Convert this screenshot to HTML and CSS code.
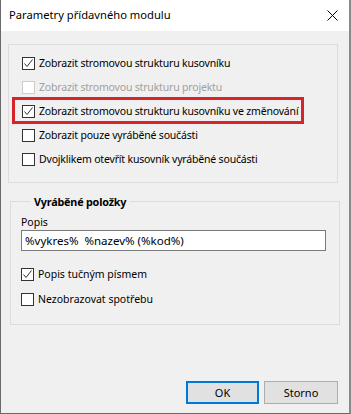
FILE: index.html
```html
<!DOCTYPE html>
<html lang="cs">
<head>
    <meta charset="UTF-8">
    <meta name="viewport" content="width=device-width, initial-scale=1.0">
    <title>Parametry přídavného modulu</title>
    <link rel="stylesheet" href="styles.css">
</head>
<body>
    <div class="window">
        <div class="titlebar">
            <span class="title">Parametry přídavného modulu</span>
            <svg class="close" width="11" height="11" viewBox="0 0 11 11">
                <path d="M0.5 0.5 L10.5 10.5 M10.5 0.5 L0.5 10.5" stroke="#000" stroke-width="1" fill="none"/>
            </svg>
        </div>
        <div class="content">
            <div class="group first">
                <label class="row">
                    <span class="box"><svg width="11" height="11" viewBox="0 0 11 11"><path d="M1.5 5.5 L4 8.5 L9.5 1.5" stroke="#333" stroke-width="1" fill="none"/></svg></span>
                    Zobrazit stromovou strukturu kusovníku
                </label>
                <label class="row disabled">
                    <span class="box"></span>
                    Zobrazit stromovou strukturu projektu
                </label>
                <label class="row marked">
                    <span class="box"><svg width="11" height="11" viewBox="0 0 11 11"><path d="M1.5 5.5 L4 8.5 L9.5 1.5" stroke="#333" stroke-width="1" fill="none"/></svg></span>
                    Zobrazit stromovou strukturu kusovníku ve změnování
                    <span class="highlight"></span>
                </label>
                <label class="row">
                    <span class="box"></span>
                    Zobrazit pouze vyráběné součásti
                </label>
                <label class="row">
                    <span class="box"></span>
                    Dvojklikem otevřít kusovník vyráběné součásti
                </label>
            </div>

            <fieldset class="group second">
                <legend>Vyráběné položky</legend>
                <div class="field-label">Popis</div>
                <div class="textbox">%vykres%&nbsp; %nazev% (%kod%)</div>
                <label class="row">
                    <span class="box"><svg width="11" height="11" viewBox="0 0 11 11"><path d="M1.5 5.5 L4 8.5 L9.5 1.5" stroke="#333" stroke-width="1" fill="none"/></svg></span>
                    Popis tučným písmem
                </label>
                <label class="row">
                    <span class="box"></span>
                    Nezobrazovat spotřebu
                </label>
            </fieldset>
        </div>
        <div class="buttons">
            <button class="default">OK</button>
            <button class="cancel">Storno</button>
        </div>
    </div>
</body>
</html>
```

FILE: styles.css
```css
body {
    margin: 0;
    font-family: "Noto Sans", sans-serif;
    font-size: 10.5px;
    color: #000;
    background-color: #f0f0f0;
}

.window {
    box-sizing: border-box;
    width: 351px;
    height: 414px;
    display: flex;
    flex-direction: column;
    background-color: #f0f0f0;
    border: 1px solid #6a6a6a;
    border-top: none;
    border-right: 2px solid #8a8a8a;
}

.titlebar {
    height: 31px;
    flex-shrink: 0;
    display: flex;
    align-items: center;
    justify-content: space-between;
    background-color: #fff;
    padding: 0 11px 0 8px;
}

.title {
    font-size: 11.2px;
    margin-top: -2px;
}

.close {
    margin-top: -1px;
}

.content {
    flex: 1;
    padding: 13px 11px 0 7px;
}

.group {
    border: 1px solid #dcdcdc;
}

.first {
    height: 139px;
    box-sizing: border-box;
    padding: 10px 12px 0 13px;
    display: flex;
    flex-direction: column;
    gap: 8px;
}

.row {
    position: relative;
    display: flex;
    align-items: center;
    gap: 4px;
    height: 16px;
    white-space: nowrap;
    letter-spacing: -0.18px;
}

.box {
    box-sizing: border-box;
    width: 13px;
    height: 13px;
    border: 1px solid #333;
    background-color: #fff;
    flex-shrink: 0;
}

.box svg {
    display: block;
}

.disabled {
    color: #a0a0a0;
}

.disabled .box {
    border-color: #cccccc;
}

/* red annotation frame around the third option */
.highlight {
    position: absolute;
    left: -10px;
    top: -6px;
    width: 292px;
    height: 27px;
    box-sizing: border-box;
    border: 3px solid #d9232b;
}

.second {
    margin: 11px -2px 0 2px;
    padding: 4px 12px 0 10px;
    height: 131px;
    box-sizing: border-box;
}

.second legend {
    font-weight: bold;
    font-size: 10.8px;
    letter-spacing: -0.2px;
    padding: 0 4px;
    margin-left: 9px;
}

.second .row {
    letter-spacing: 0;
}

.field-label {
    margin-top: 1px;
    line-height: 16px;
}

.textbox {
    box-sizing: border-box;
    height: 21px;
    width: 305px;
    border: 1px solid #7a7a7a;
    background-color: #fff;
    padding: 1px 3px;
    font-size: 11.5px;
    line-height: 17px;
    margin-bottom: 15px;
}

.second .row + .row {
    margin-top: 9px;
}

.buttons {
    display: flex;
    justify-content: flex-end;
    gap: 5px;
    padding: 0 11px 9px 0;
}

button {
    box-sizing: border-box;
    flex-shrink: 0;
    width: 73px;
    height: 23px;
    font-family: "Noto Sans", sans-serif;
    font-size: 11px;
    background-color: #e1e1e1;
    border: 1px solid #adadad;
    padding: 0;
    color: #000;
}

button.cancel {
    width: 74px;
}

button.default {
    border: 2px solid #0078d7;
}
```
